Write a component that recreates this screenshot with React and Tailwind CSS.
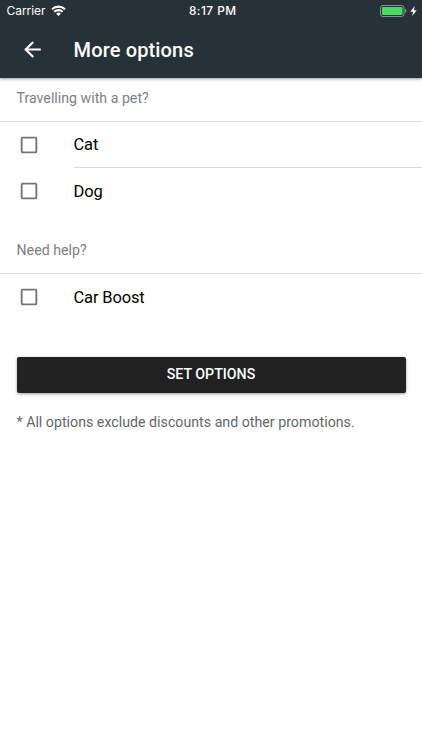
import React, { useState } from 'react'

const sections = [
  {
    title: 'Travelling with a pet?',
    options: [
      { id: 'cat', label: 'Cat' },
      { id: 'dog', label: 'Dog' }
    ]
  },
  {
    title: 'Need help?',
    options: [{ id: 'boost', label: 'Car Boost' }]
  }
]

function StatusBar() {
  return (
    <div className="grid h-[22px] grid-cols-3 items-center pl-[6.5px] pr-[5px] font-['Inter',sans-serif] text-[12px] leading-[22px] text-white">
      <div className="flex items-center gap-[5.5px]">
        <span className="tracking-[-0.05px]">Carrier</span>
        <svg width="15" height="11" viewBox="0 0 15 11" fill="none" stroke="currentColor" strokeWidth="2.1" className="mb-px">
          <path d="M1 4.200a9.400 9.400 0 0 1 13 0M3.300 6.800a6 6 0 0 1 8.400 0" />
          <path d="M7.500 11 5.200 8.700a3.300 3.300 0 0 1 4.600 0z" fill="currentColor" stroke="none" />
        </svg>
      </div>
      <div className="pl-[2px] text-center text-[11.8px] font-medium tracking-[0.5px]">8:17 PM</div>
      <div className="flex items-center justify-end gap-[3px]">
        <svg width="27" height="12" viewBox="0 0 27 12" fill="none">
          <rect x="0.5" y="0.5" width="23.500" height="11" rx="2.500" stroke="#8b9194" />
          <rect x="2" y="2" width="20.500" height="8" rx="1.200" fill="#4cd964" />
          <path d="M25 4v4c.9-.4 1.400-1.100 1.400-2S25.900 4.400 25 4z" fill="#8b9194" />
        </svg>
        <svg width="7" height="10" viewBox="0 0 7 10" fill="currentColor">
          <path d="M4.700 0 .3 5.700h2.800L2.200 10 6.700 4.200H3.900z" />
        </svg>
      </div>
    </div>
  )
}

function OptionRow({ label, checked, divider, onToggle }) {
  return (
    <label className="flex h-[46.5px] pl-[17.5px]">
      <span className="flex w-[56px] items-center">
        <input type="checkbox" checked={checked} onChange={onToggle} className="sr-only" />
        <svg width="22" height="22" viewBox="0 0 24 24" fill="#737373">
          {checked ? (
            <path d="M19 3H5a2 2 0 0 0-2 2v14a2 2 0 0 0 2 2h14a2 2 0 0 0 2-2V5a2 2 0 0 0-2-2zm-9 14-5-5 1.400-1.400L10 14.200l7.600-7.600L19 8z" />
          ) : (
            <path d="M19 5v14H5V5h14m0-2H5a2 2 0 0 0-2 2v14a2 2 0 0 0 2 2h14a2 2 0 0 0 2-2V5a2 2 0 0 0-2-2z" />
          )}
        </svg>
      </span>
      <span className={`flex flex-1 items-center pt-[2.5px] text-[16.5px] tracking-[-0.15px] text-black ${divider ? 'border-b border-[#dadada]' : ''}`}>
        {label}
      </span>
    </label>
  )
}

function App() {
  const [selected, setSelected] = useState({})

  const toggle = (id) => setSelected((prev) => ({ ...prev, [id]: !prev[id] }))

  return (
    <div className="min-h-screen bg-white font-['Roboto',sans-serif]">
      <header className="relative h-[77.5px] bg-[#263238] shadow-[0_1px_3px_rgba(0,0,0,0.4)]">
        <StatusBar />
        <div className="flex h-[54px] items-center pl-[20px]">
          <button type="button" aria-label="Back" className="w-[53.5px]">
            <svg width="25" height="25" viewBox="0 0 24 24" fill="#fff">
              <path d="M20 11H7.830l5.590-5.590L12 4l-8 8 8 8 1.410-1.410L7.830 13H20v-2z" />
            </svg>
          </button>
          <h1 className="pt-px text-[20px] font-medium tracking-[0.15px] text-white">More options</h1>
        </div>
      </header>

      <main>
        {sections.map((section) => (
          <section key={section.title} className="mb-[15px]">
            <h2 className="flex h-[44px] items-center border-b border-[#dadada] px-[16.5px] text-[14.2px] text-[#808080]">
              {section.title}
            </h2>
            {section.options.map((option, i) => (
              <OptionRow
                key={option.id}
                label={option.label}
                checked={Boolean(selected[option.id])}
                divider={i < section.options.length - 1}
                onToggle={() => toggle(option.id)}
              />
            ))}
          </section>
        ))}

        <div className="px-[16.5px] pt-[21.5px]">
          <button
            type="button"
            className="h-[36px] w-full rounded-[2px] bg-[#212121] text-[14.2px] font-medium text-white shadow-[0_1px_3px_rgba(0,0,0,0.4)]"
          >
            SET OPTIONS
          </button>
          <p className="mt-[19px] text-[14.2px] leading-[20px] tracking-[0.01px] text-[#666]">
            * All options exclude discounts and other promotions.
          </p>
        </div>
      </main>
    </div>
  )
}

export default App
